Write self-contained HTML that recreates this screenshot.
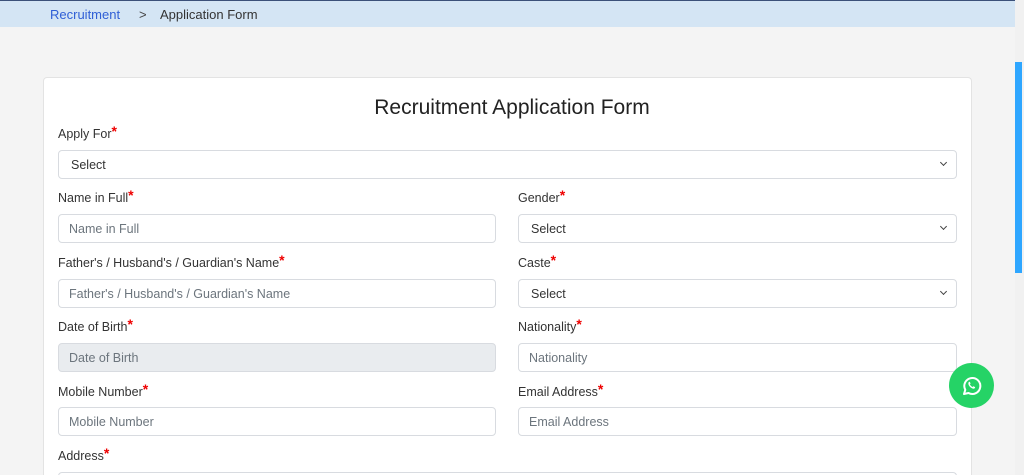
<!DOCTYPE html>
<html style="width:1024px;height:475px;overflow:hidden"><head><style>
*{box-sizing:border-box;margin:0;padding:0}
body{width:1024px;height:475px;overflow:hidden;background:#f4f4f4;font-family:"Liberation Sans",sans-serif;position:relative;color:#212529}
.bc{position:absolute;left:0;top:0;width:1015px;height:27px;background:#d4e5f4;border-top:1px solid #3b5079;font-size:13px}
.bc span{position:absolute;top:6px}
.sb{position:absolute;right:0;top:0;width:9px;height:475px;background:#f1f1f1}
.th{position:absolute;right:2px;top:62px;width:7px;height:211px;background:#2ea6ff}
.card{position:absolute;left:43px;top:77px;width:929px;height:398px;background:#fff;border:1px solid #e3e3e3;border-bottom:none;border-radius:4px 4px 0 0}
h1{position:absolute;left:0;width:100%;top:96px;text-align:center;font-weight:normal;font-size:21px;color:#222}
.l{position:absolute;font-size:12.5px;color:#333}
.l b{color:#e00;font-size:14px;vertical-align:2px;line-height:0}
.f{position:absolute;height:29px;border:1px solid #d8dbe0;border-radius:4px;background:#fff;font-size:12.5px;color:#6c757d;padding:7px 10px}
.s{color:#333;padding-left:12px}
.s:after{content:"";position:absolute;right:10px;top:9px;width:4px;height:4px;border-right:1.5px solid #444;border-bottom:1.5px solid #444;transform:rotate(45deg)}
.wa{position:absolute;left:949px;top:363px;width:45px;height:45px;border-radius:50%;background:#25d366}
</style></head><body>
<div class="bc"><span style="left:50px;color:#2f5fd6">Recruitment</span><span style="left:139px;color:#444">&gt;</span><span style="left:160px;color:#333">Application Form</span></div>
<div class="sb"><div class="th"></div></div>
<div class="card"></div>
<h1>Recruitment Application Form</h1>
<div class="l" style="left:58px;top:127px">Apply For<b>*</b></div>
<div class="f s" style="left:58px;top:150px;width:899px">Select</div>
<div class="l" style="left:58px;top:191px">Name in Full<b>*</b></div>
<div class="f" style="left:58px;top:214px;width:438px">Name in Full</div>
<div class="l" style="left:518px;top:191px">Gender<b>*</b></div>
<div class="f s" style="left:518px;top:214px;width:439px">Select</div>
<div class="l" style="left:58px;top:256px">Father's / Husband's / Guardian's Name<b>*</b></div>
<div class="f" style="left:58px;top:279px;width:438px">Father's / Husband's / Guardian's Name</div>
<div class="l" style="left:518px;top:256px">Caste<b>*</b></div>
<div class="f s" style="left:518px;top:279px;width:439px">Select</div>
<div class="l" style="left:58px;top:320px">Date of Birth<b>*</b></div>
<div class="f" style="left:58px;top:343px;width:438px;background:#e9ecef">Date of Birth</div>
<div class="l" style="left:518px;top:320px">Nationality<b>*</b></div>
<div class="f" style="left:518px;top:343px;width:439px">Nationality</div>
<div class="l" style="left:58px;top:385px">Mobile Number<b>*</b></div>
<div class="f" style="left:58px;top:407px;width:438px">Mobile Number</div>
<div class="l" style="left:518px;top:385px">Email Address<b>*</b></div>
<div class="f" style="left:518px;top:407px;width:439px">Email Address</div>
<div class="l" style="left:58px;top:449px">Address<b>*</b></div>
<div class="f" style="left:58px;top:472px;width:899px;height:3px;border-bottom:none;border-radius:4px 4px 0 0"></div>
<div class="wa"><svg width="45" height="45" viewBox="0 0 45 45"><path d="M15 31l1.3-4.2A8 8 0 1 1 19.5 30z" fill="none" stroke="#fff" stroke-width="2" stroke-linejoin="round"/><path d="M19.5 19.5c.5-1 1.2-1 1.5-.3l.6 1.3-.7.9c.6 1.2 1.5 2 2.6 2.6l.9-.7 1.3.6c.6.3.6 1-.3 1.6-2.500 1.2-7-3.4-5.9-6z" fill="#fff"/></svg></div>
</body></html>
